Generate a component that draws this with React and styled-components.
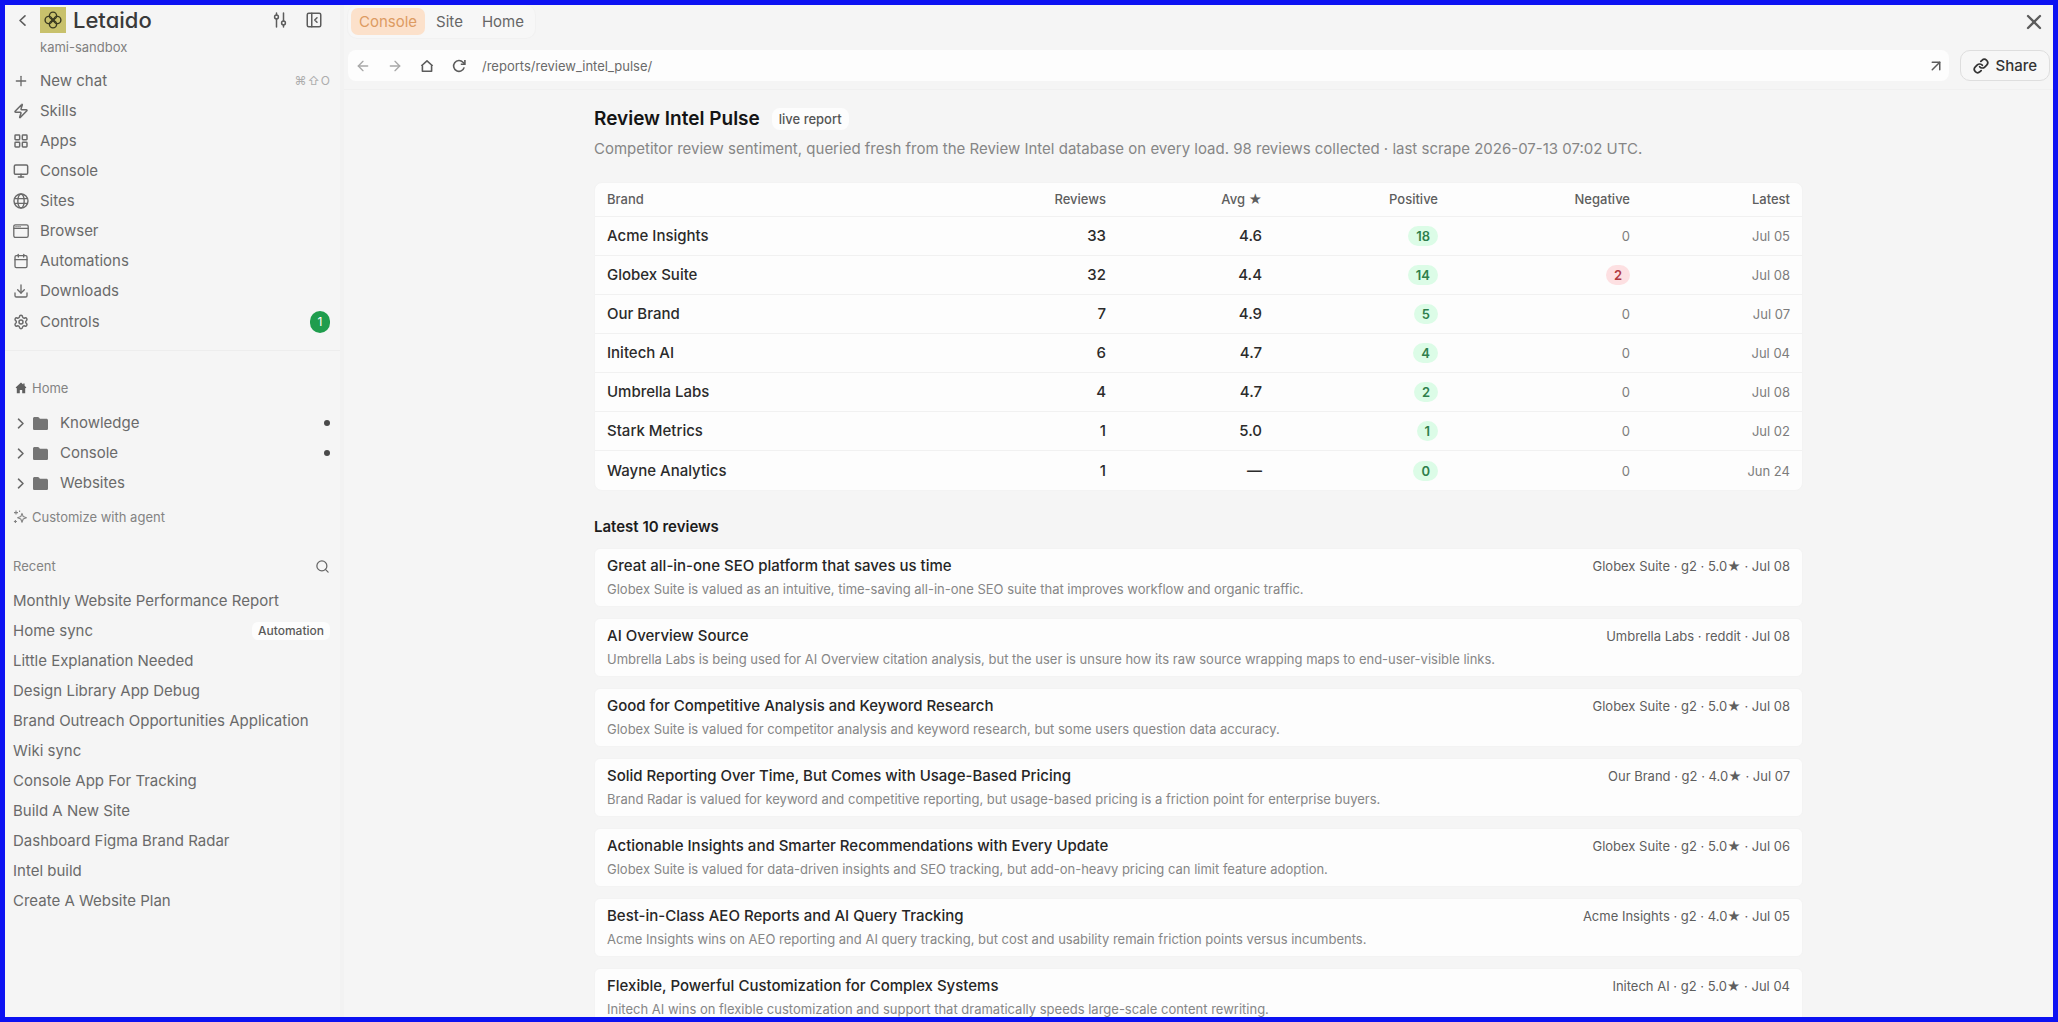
import React from "react"
import styled, { createGlobalStyle } from "styled-components"
import {
  ArrowLeft,
  ArrowRight,
  ArrowUpRight,
  Calendar,
  Download,
  LayoutGrid,
  Link,
  Monitor,
  PanelLeftClose,
  Plus,
  Search,
  Settings,
  X,
  Zap,
} from "lucide-react"

const GlobalStyle = createGlobalStyle`
  * {
    box-sizing: border-box;
  }

  body {
    margin: 0;
    background: #f5f5f5;
    color: #6a6a6a;
    font-family: Inter, "Liberation Sans", sans-serif;
    font-size: 15px;
    line-height: 20px;
  }

  button, input {
    font: inherit;
    color: inherit;
    background: none;
    border: 0;
    padding: 0;
  }

  button {
    cursor: pointer;
  }

  a {
    color: inherit;
    text-decoration: none;
  }

  ul {
    list-style: none;
    margin: 0;
    padding: 0;
  }

  svg {
    display: block;
    flex: none;
  }
`

const Frame = styled.div`
  display: flex;
  height: 100vh;
  border: 5px solid #0d12f2;
  overflow: hidden;
`

const Sidebar = styled.aside`
  flex: none;
  width: 339px;
  padding-top: 2px;
  border-right: 4px solid #f2f2f2;
  overflow: hidden;
`

const SidebarHeader = styled.header`
  display: flex;
  align-items: center;
  height: 26px;
  padding: 0 17px 0 8px;
`

const IconButton = styled.button`
  display: flex;
  align-items: center;
  justify-content: center;
  flex: none;
  width: 18px;
  height: ${props => props.$height || 26}px;
  color: ${props => props.$color || "#5c5c5c"};
`

const Brand = styled.a`
  display: flex;
  align-items: center;
  flex: 1;
  gap: 7px;
  margin-left: 9px;
`

const Wordmark = styled.span`
  color: #3a3a3a;
  font-size: 22px;
  font-weight: 500;
  line-height: 26px;
  font-feature-settings: "cv11";
`

const HeaderTools = styled.div`
  display: flex;
  gap: 16px;
`

const Workspace = styled.p`
  margin: 4px 0 9px;
  padding-left: 35px;
  color: #808080;
  font-size: 13px;
`

const NavItem = styled.a`
  display: flex;
  align-items: center;
  gap: 11px;
  height: ${props => props.$height || 30}px;
  padding: 0 10px 0 8px;
`

const NavLabel = styled.span`
  flex: 1;
`

const Shortcut = styled.kbd`
  display: flex;
  gap: 1px;
  color: #adadad;
  font-family: Inter, "DejaVu Sans", sans-serif;
  font-size: 12px;
`

const Count = styled.span`
  width: 20px;
  border-radius: 10px;
  background: #1f9d4d;
  color: #fff;
  font-size: 12px;
  line-height: 22px;
  text-align: center;
`

const Divider = styled.hr`
  height: 1px;
  margin: 12px 0 27px;
  border: 0;
  background: #ededed;
`

const SmallRow = styled.div`
  display: flex;
  align-items: center;
  padding: 0 10px 0 8px;
  margin-bottom: ${props => props.$bottom || 0}px;
  color: #838383;
  font-size: 13px;
`

const SmallButton = styled.button`
  display: flex;
  align-items: center;
  gap: 5px;
`

const FolderList = styled.ul`
  margin: 10px 0 9px;
`

const Folder = styled.button`
  display: flex;
  align-items: center;
  width: 100%;
  height: 30px;
  padding: 0 10px 0 8px;
  text-align: left;
`

const Chevron = styled.span`
  width: 20px;
`

const FolderLabel = styled.span`
  flex: 1;
  margin-left: 12px;
`

const Dot = styled.i`
  width: 6px;
  height: 6px;
  border-radius: 50%;
  background: #4a4a4a;
`

const RecentTag = styled.span`
  padding: 0 6px;
  border-radius: 6px;
  background: #fdfdfd;
  color: #5a5a5a;
  font-size: 12px;
  font-weight: 500;
  line-height: 18px;
`

const Main = styled.main`
  display: flex;
  flex: 1;
  flex-direction: column;
  min-width: 0;
`

const TopBar = styled.div`
  display: flex;
  align-items: flex-start;
  justify-content: space-between;
  height: 45px;
  padding: 0 10px 0 3px;
`

const Tabs = styled.div`
  display: flex;
  gap: 3px;
  padding: 3px;
  border: 1px solid #f1f1f1;
  border-top: 0;
  border-radius: 10px;
  background: #f7f7f7;
`

const Tab = styled.button`
  height: 27px;
  padding: 0 8px;
  border-radius: 7px;
  background: ${props => (props.$active ? "#fce1cb" : "transparent")};
  color: ${props => (props.$active ? "#dd9b62" : "#666")};
`

const AddressRow = styled.div`
  display: flex;
  gap: 11px;
  padding: 0 3px 8px 4px;
  border-bottom: 1px solid #f0f0f0;
`

const AddressBar = styled.div`
  display: flex;
  align-items: center;
  flex: 1;
  gap: 14px;
  height: 31px;
  padding: 0 4px 0 6px;
  border-radius: 8px;
  background: #fdfdfd;
`

const PathInput = styled.input`
  flex: 1;
  min-width: 0;
  outline: none;
  color: #6a6a6a;
  font-size: 13px;
`

const ShareButton = styled.button`
  display: flex;
  align-items: center;
  justify-content: center;
  gap: 6px;
  padding: 0 12px;
  border: 1px solid #dedede;
  border-radius: 10px;
  background: #f7f7f7;
  color: #333;
  font-weight: 500;
`

const Scroller = styled.div`
  flex: 1;
  min-height: 0;
  overflow: hidden;
`

const Report = styled.article`
  max-width: 1209px;
  margin: 0 auto;
  padding-top: 18px;
`

const TitleRow = styled.div`
  display: flex;
  align-items: center;
  gap: 12px;
`

const Title = styled.h1`
  margin: 0;
  color: #141414;
  font-size: 19px;
  font-weight: 600;
  line-height: 22px;
`

const LiveTag = styled.span`
  padding: 0 7px;
  border-radius: 8px;
  background: #fdfdfd;
  color: #555;
  font-size: 13px;
  font-weight: 500;
  line-height: 22px;
`

const Intro = styled.p`
  margin: 9px 0 23px;
  color: #868686;
`

const TableCard = styled.div`
  border: 1px solid #f3f3f3;
  border-radius: 8px;
  background: #fdfdfd;
`

const BrandTable = styled.table`
  width: 100%;
  border-collapse: separate;
  border-spacing: 0;
  table-layout: fixed;

  tr:not(:last-child) td {
    border-bottom: 1px solid #f1f1f1;
  }
`

const Col = styled.col`
  width: ${props => props.$width}px;
`

const Th = styled.th`
  height: 34px;
  padding: 0 12px 2px;
  border-bottom: 1px solid #f1f1f1;
  color: #5e5e5e;
  font-size: 13px;
  font-weight: 500;
  text-align: ${props => (props.$left ? "left" : "right")};
`

const Td = styled.td`
  height: 39px;
  padding: 0 12px;
  color: ${props => (props.$muted ? "#7c7c7c" : "#2b2b2b")};
  font-size: ${props => (props.$muted ? 13 : 15)}px;
  font-weight: ${props => (props.$muted ? 400 : 500)};
  text-align: ${props => (props.$left ? "left" : "right")};
`

const Pill = styled.span`
  display: inline-block;
  padding: 0 8px;
  border-radius: 10px;
  background: ${props => (props.$bad ? "#fde0e2" : "#dcfce7")};
  color: ${props => (props.$bad ? "#b13a42" : "#2f7f4c")};
  font-size: 13px;
  font-weight: 600;
`

const SectionTitle = styled.h2`
  margin: 26px 0 11px;
  color: #1c1c1c;
  font-size: 15px;
  font-weight: 600;
  line-height: 20px;
`

const ReviewList = styled.ul`
  display: grid;
  gap: 11px;
`

const Review = styled.li`
  padding: 7px 12px;
  border: 1px solid #f3f3f3;
  border-radius: 6px;
  background: #fdfdfd;
`

const ReviewHead = styled.div`
  display: flex;
  justify-content: space-between;
  gap: 24px;
`

const ReviewTitle = styled.h3`
  margin: 0;
  color: #262626;
  font-size: 15px;
  font-weight: 500;
`

const ReviewMeta = styled.span`
  color: #5e5e5e;
  font-size: 13px;
`

const ReviewText = styled.p`
  margin: 3px 0 0;
  color: #868686;
  font-size: 13px;
`

const LogoMark = () => (
  <svg width="26" height="26" viewBox="0 0 26 26" fill="none" stroke="#3b3a20" strokeWidth="1.4">
    <rect width="26" height="26" fill="#c8c16c" stroke="none" />
    <circle cx="13" cy="8.7" r="3.6" />
    <circle cx="13" cy="17.3" r="3.6" />
    <circle cx="8.7" cy="13" r="3.6" />
    <circle cx="17.3" cy="13" r="3.6" />
    <path d="M11 11l4 4M15 11l-4 4" />
  </svg>
)

const ChevronIcon = ({ left }) => (
  <svg width="15" height="15" viewBox="0 0 15 15" fill="none" stroke="currentColor" strokeWidth="1.6" strokeLinecap="round" strokeLinejoin="round">
    <path d={left ? "M10 2.800 5 7.500l5 4.700" : "M5.500 3.200l4.500 4.300-4.500 4.300"} />
  </svg>
)

const SlidersIcon = () => (
  <svg width="14" height="16" viewBox="0 0 14 16" fill="none" stroke="currentColor" strokeWidth="1.5" strokeLinecap="round">
    <path d="M3.5 1v2M3.5 7v8M10.5 1v8M10.5 13v2" />
    <circle cx="3.5" cy="5" r="1.9" />
    <circle cx="10.5" cy="11" r="1.9" />
  </svg>
)

const GlobeIcon = () => (
  <svg width="16" height="16" viewBox="0 0 16 16" fill="none" stroke="currentColor" strokeWidth="1.4">
    <circle cx="8" cy="8" r="7" />
    <ellipse cx="8" cy="8" rx="3.2" ry="7" />
    <path d="M1.7 5.6h12.6M1.7 10.4h12.6" />
  </svg>
)

const BrowserIcon = () => (
  <svg width="16" height="16" viewBox="0 0 16 16" fill="none" stroke="currentColor" strokeWidth="1.3" strokeLinecap="round">
    <rect x="0.8" y="1.8" width="14.4" height="12.6" rx="1.6" />
    <path d="M1 5.4h14M3 3.7h.1M5 3.7h.1M7 3.7h.1" />
  </svg>
)

const HomeSolid = () => (
  <svg width="14" height="12" viewBox="-2 0 14 12" fill="#5f5f5f">
    <path d="M6 .6.6 5.4l.8.9.4-.3v5.2h3V8h2.4v3.2h3V6l.4.3.8-.9L9.6 3.8V1.6H8.2v1z" />
  </svg>
)

const HomeOutline = () => (
  <svg width="14" height="14" viewBox="0 0 14 14" fill="none" stroke="currentColor" strokeWidth="1.6" strokeLinejoin="round">
    <path d="M7 1.800 2.400 6v6.200h9.200V6zM1.400 7 2.400 6M12.600 7l-1-1" />
  </svg>
)

const ReloadIcon = () => (
  <svg width="14" height="14" viewBox="0 0 14 14" fill="none" stroke="currentColor" strokeWidth="1.6">
    <path d="M12.2 8.4A5.4 5.4 0 1 1 11 3.3l1.6 1.5" />
    <path d="M12.9 1v4.2H8.8" />
  </svg>
)

const FolderSolid = () => (
  <svg width="15" height="13" viewBox="0 0 15 13" fill="#757575">
    <path d="M0 1.6C0 .7.7 0 1.6 0h3.2c.5 0 .9.2 1.2.6l.9 1.2h6.5c.9 0 1.6.7 1.6 1.6v8c0 .9-.7 1.6-1.6 1.6H1.6C.7 13 0 12.3 0 11.4z" />
  </svg>
)

const SparklesIcon = () => (
  <svg width="14" height="14" viewBox="0 0 14 14" fill="none" stroke="currentColor" strokeWidth="1.1" strokeLinejoin="round">
    <path d="M9 3.4l1.2 3.2 3.2 1.2-3.2 1.2L9 12.200 7.800 9 4.600 7.800l3.200-1.200z" />
    <path d="M3 .6v4M1 2.600h4M2.400 10v3M.9 11.500h3M6.600.6v1.400" />
  </svg>
)

const navItems = [
  { label: "New chat", icon: <Plus size={16} />, keys: ["⌘", "⇧", "O"] },
  { label: "Skills", icon: <Zap size={16} strokeWidth={2.3} /> },
  { label: "Apps", icon: <LayoutGrid size={16} strokeWidth={2.2} /> },
  { label: "Console", icon: <Monitor size={16} strokeWidth={2.2} /> },
  { label: "Sites", icon: <GlobeIcon /> },
  { label: "Browser", icon: <BrowserIcon /> },
  { label: "Automations", icon: <Calendar size={16} /> },
  { label: "Downloads", icon: <Download size={16} /> },
  { label: "Controls", icon: <Settings size={16} strokeWidth={2.2} />, count: 1 },
]

const folders = [
  { label: "Knowledge", dot: true },
  { label: "Console", dot: true },
  { label: "Websites" },
]

const recent = [
  { label: "Monthly Website Performance Report" },
  { label: "Home sync", tag: "Automation" },
  { label: "Little Explanation Needed" },
  { label: "Design Library App Debug" },
  { label: "Brand Outreach Opportunities Application" },
  { label: "Wiki sync" },
  { label: "Console App For Tracking" },
  { label: "Build A New Site" },
  { label: "Dashboard Figma Brand Radar" },
  { label: "Intel build" },
  { label: "Create A Website Plan" },
]

const brands = [
  { name: "Acme Insights", reviews: 33, avg: "4.6", positive: 18, negative: 0, latest: "Jul 05" },
  { name: "Globex Suite", reviews: 32, avg: "4.4", positive: 14, negative: 2, latest: "Jul 08" },
  { name: "Our Brand", reviews: 7, avg: "4.9", positive: 5, negative: 0, latest: "Jul 07" },
  { name: "Initech AI", reviews: 6, avg: "4.7", positive: 4, negative: 0, latest: "Jul 04" },
  { name: "Umbrella Labs", reviews: 4, avg: "4.7", positive: 2, negative: 0, latest: "Jul 08" },
  { name: "Stark Metrics", reviews: 1, avg: "5.0", positive: 1, negative: 0, latest: "Jul 02" },
  { name: "Wayne Analytics", reviews: 1, avg: "—", positive: 0, negative: 0, latest: "Jun 24" },
]

const reviews = [
  {
    title: "Great all-in-one SEO platform that saves us time",
    meta: "Globex Suite · g2 · 5.0★ · Jul 08",
    text: "Globex Suite is valued as an intuitive, time-saving all-in-one SEO suite that improves workflow and organic traffic.",
  },
  {
    title: "AI Overview Source",
    meta: "Umbrella Labs · reddit · Jul 08",
    text: "Umbrella Labs is being used for AI Overview citation analysis, but the user is unsure how its raw source wrapping maps to end-user-visible links.",
  },
  {
    title: "Good for Competitive Analysis and Keyword Research",
    meta: "Globex Suite · g2 · 5.0★ · Jul 08",
    text: "Globex Suite is valued for competitor analysis and keyword research, but some users question data accuracy.",
  },
  {
    title: "Solid Reporting Over Time, But Comes with Usage-Based Pricing",
    meta: "Our Brand · g2 · 4.0★ · Jul 07",
    text: "Brand Radar is valued for keyword and competitive reporting, but usage-based pricing is a friction point for enterprise buyers.",
  },
  {
    title: "Actionable Insights and Smarter Recommendations with Every Update",
    meta: "Globex Suite · g2 · 5.0★ · Jul 06",
    text: "Globex Suite is valued for data-driven insights and SEO tracking, but add-on-heavy pricing can limit feature adoption.",
  },
  {
    title: "Best-in-Class AEO Reports and AI Query Tracking",
    meta: "Acme Insights · g2 · 4.0★ · Jul 05",
    text: "Acme Insights wins on AEO reporting and AI query tracking, but cost and usability remain friction points versus incumbents.",
  },
  {
    title: "Flexible, Powerful Customization for Complex Systems",
    meta: "Initech AI · g2 · 5.0★ · Jul 04",
    text: "Initech AI wins on flexible customization and support that dramatically speeds large-scale content rewriting.",
  },
]

function SidebarPanel() {
  return (
    <Sidebar>
      <SidebarHeader>
        <IconButton aria-label="Back"><ChevronIcon left /></IconButton>
        <Brand href="#home">
          <LogoMark />
          <Wordmark>Letaido</Wordmark>
        </Brand>
        <HeaderTools>
          <IconButton aria-label="Preferences"><SlidersIcon /></IconButton>
          <IconButton aria-label="Collapse sidebar"><PanelLeftClose size={18} /></IconButton>
        </HeaderTools>
      </SidebarHeader>
      <Workspace>kami-sandbox</Workspace>
      <nav>
        {navItems.map(item => (
          <NavItem key={item.label} href="#nav" $height={item.count ? 32 : 30}>
            {item.icon}
            <NavLabel>{item.label}</NavLabel>
            {item.keys && <Shortcut>{item.keys.map(key => <span key={key}>{key}</span>)}</Shortcut>}
            {item.count && <Count>{item.count}</Count>}
          </NavItem>
        ))}
      </nav>
      <Divider />
      <SmallRow>
        <SmallButton><HomeSolid />Home</SmallButton>
      </SmallRow>
      <FolderList>
        {folders.map(folder => (
          <li key={folder.label}>
            <Folder>
              <Chevron><ChevronIcon /></Chevron>
              <FolderSolid />
              <FolderLabel>{folder.label}</FolderLabel>
              {folder.dot && <Dot />}
            </Folder>
          </li>
        ))}
      </FolderList>
      <SmallRow $bottom={29}>
        <SmallButton><SparklesIcon />Customize with agent</SmallButton>
      </SmallRow>
      <SmallRow $bottom={10}>
        <NavLabel>Recent</NavLabel>
        <SmallButton aria-label="Search"><Search size={15} color="#666" /></SmallButton>
      </SmallRow>
      {recent.map(item => (
        <NavItem key={item.label} href="#chat">
          <NavLabel>{item.label}</NavLabel>
          {item.tag && <RecentTag>{item.tag}</RecentTag>}
        </NavItem>
      ))}
    </Sidebar>
  )
}

function BrandsSummary() {
  return (
    <TableCard>
      <BrandTable>
        <colgroup>
          <col />
          <Col $width={188} />
          <Col $width={156} />
          <Col $width={176} />
          <Col $width={192} />
          <Col $width={160} />
        </colgroup>
        <thead>
          <tr>
            <Th $left>Brand</Th>
            <Th>Reviews</Th>
            <Th>Avg ★</Th>
            <Th>Positive</Th>
            <Th>Negative</Th>
            <Th>Latest</Th>
          </tr>
        </thead>
        <tbody>
          {brands.map(brand => (
            <tr key={brand.name}>
              <Td $left>{brand.name}</Td>
              <Td>{brand.reviews}</Td>
              <Td>{brand.avg}</Td>
              <Td><Pill>{brand.positive}</Pill></Td>
              <Td $muted>{brand.negative ? <Pill $bad>{brand.negative}</Pill> : brand.negative}</Td>
              <Td $muted>{brand.latest}</Td>
            </tr>
          ))}
        </tbody>
      </BrandTable>
    </TableCard>
  )
}

export default function App() {
  return (
    <>
      <GlobalStyle />
      <Frame>
        <SidebarPanel />
        <Main>
          <TopBar>
            <Tabs>
              <Tab $active>Console</Tab>
              <Tab>Site</Tab>
              <Tab>Home</Tab>
            </Tabs>
            <IconButton $height={33} aria-label="Close"><X size={24} strokeWidth={2.3} /></IconButton>
          </TopBar>
          <AddressRow>
            <AddressBar>
              <IconButton $color="#a8a8a8" aria-label="Go back"><ArrowLeft size={16} /></IconButton>
              <IconButton $color="#a8a8a8" aria-label="Go forward"><ArrowRight size={16} /></IconButton>
              <IconButton aria-label="Home page"><HomeOutline /></IconButton>
              <IconButton aria-label="Reload"><ReloadIcon /></IconButton>
              <PathInput aria-label="Address" defaultValue="/reports/review_intel_pulse/" />
              <IconButton aria-label="Open in new tab"><ArrowUpRight size={18} /></IconButton>
            </AddressBar>
            <ShareButton><Link size={16} strokeWidth={2.6} />Share</ShareButton>
          </AddressRow>
          <Scroller>
            <Report>
              <TitleRow>
                <Title>Review Intel Pulse</Title>
                <LiveTag>live report</LiveTag>
              </TitleRow>
              <Intro>
                Competitor review sentiment, queried fresh from the Review Intel database on every load. 98 reviews
                collected · last scrape 2026-07-13 07:02 UTC.
              </Intro>
              <BrandsSummary />
              <SectionTitle>Latest 10 reviews</SectionTitle>
              <ReviewList>
                {reviews.map(review => (
                  <Review key={review.title}>
                    <ReviewHead>
                      <ReviewTitle>{review.title}</ReviewTitle>
                      <ReviewMeta>{review.meta}</ReviewMeta>
                    </ReviewHead>
                    <ReviewText>{review.text}</ReviewText>
                  </Review>
                ))}
              </ReviewList>
            </Report>
          </Scroller>
        </Main>
      </Frame>
    </>
  )
}
